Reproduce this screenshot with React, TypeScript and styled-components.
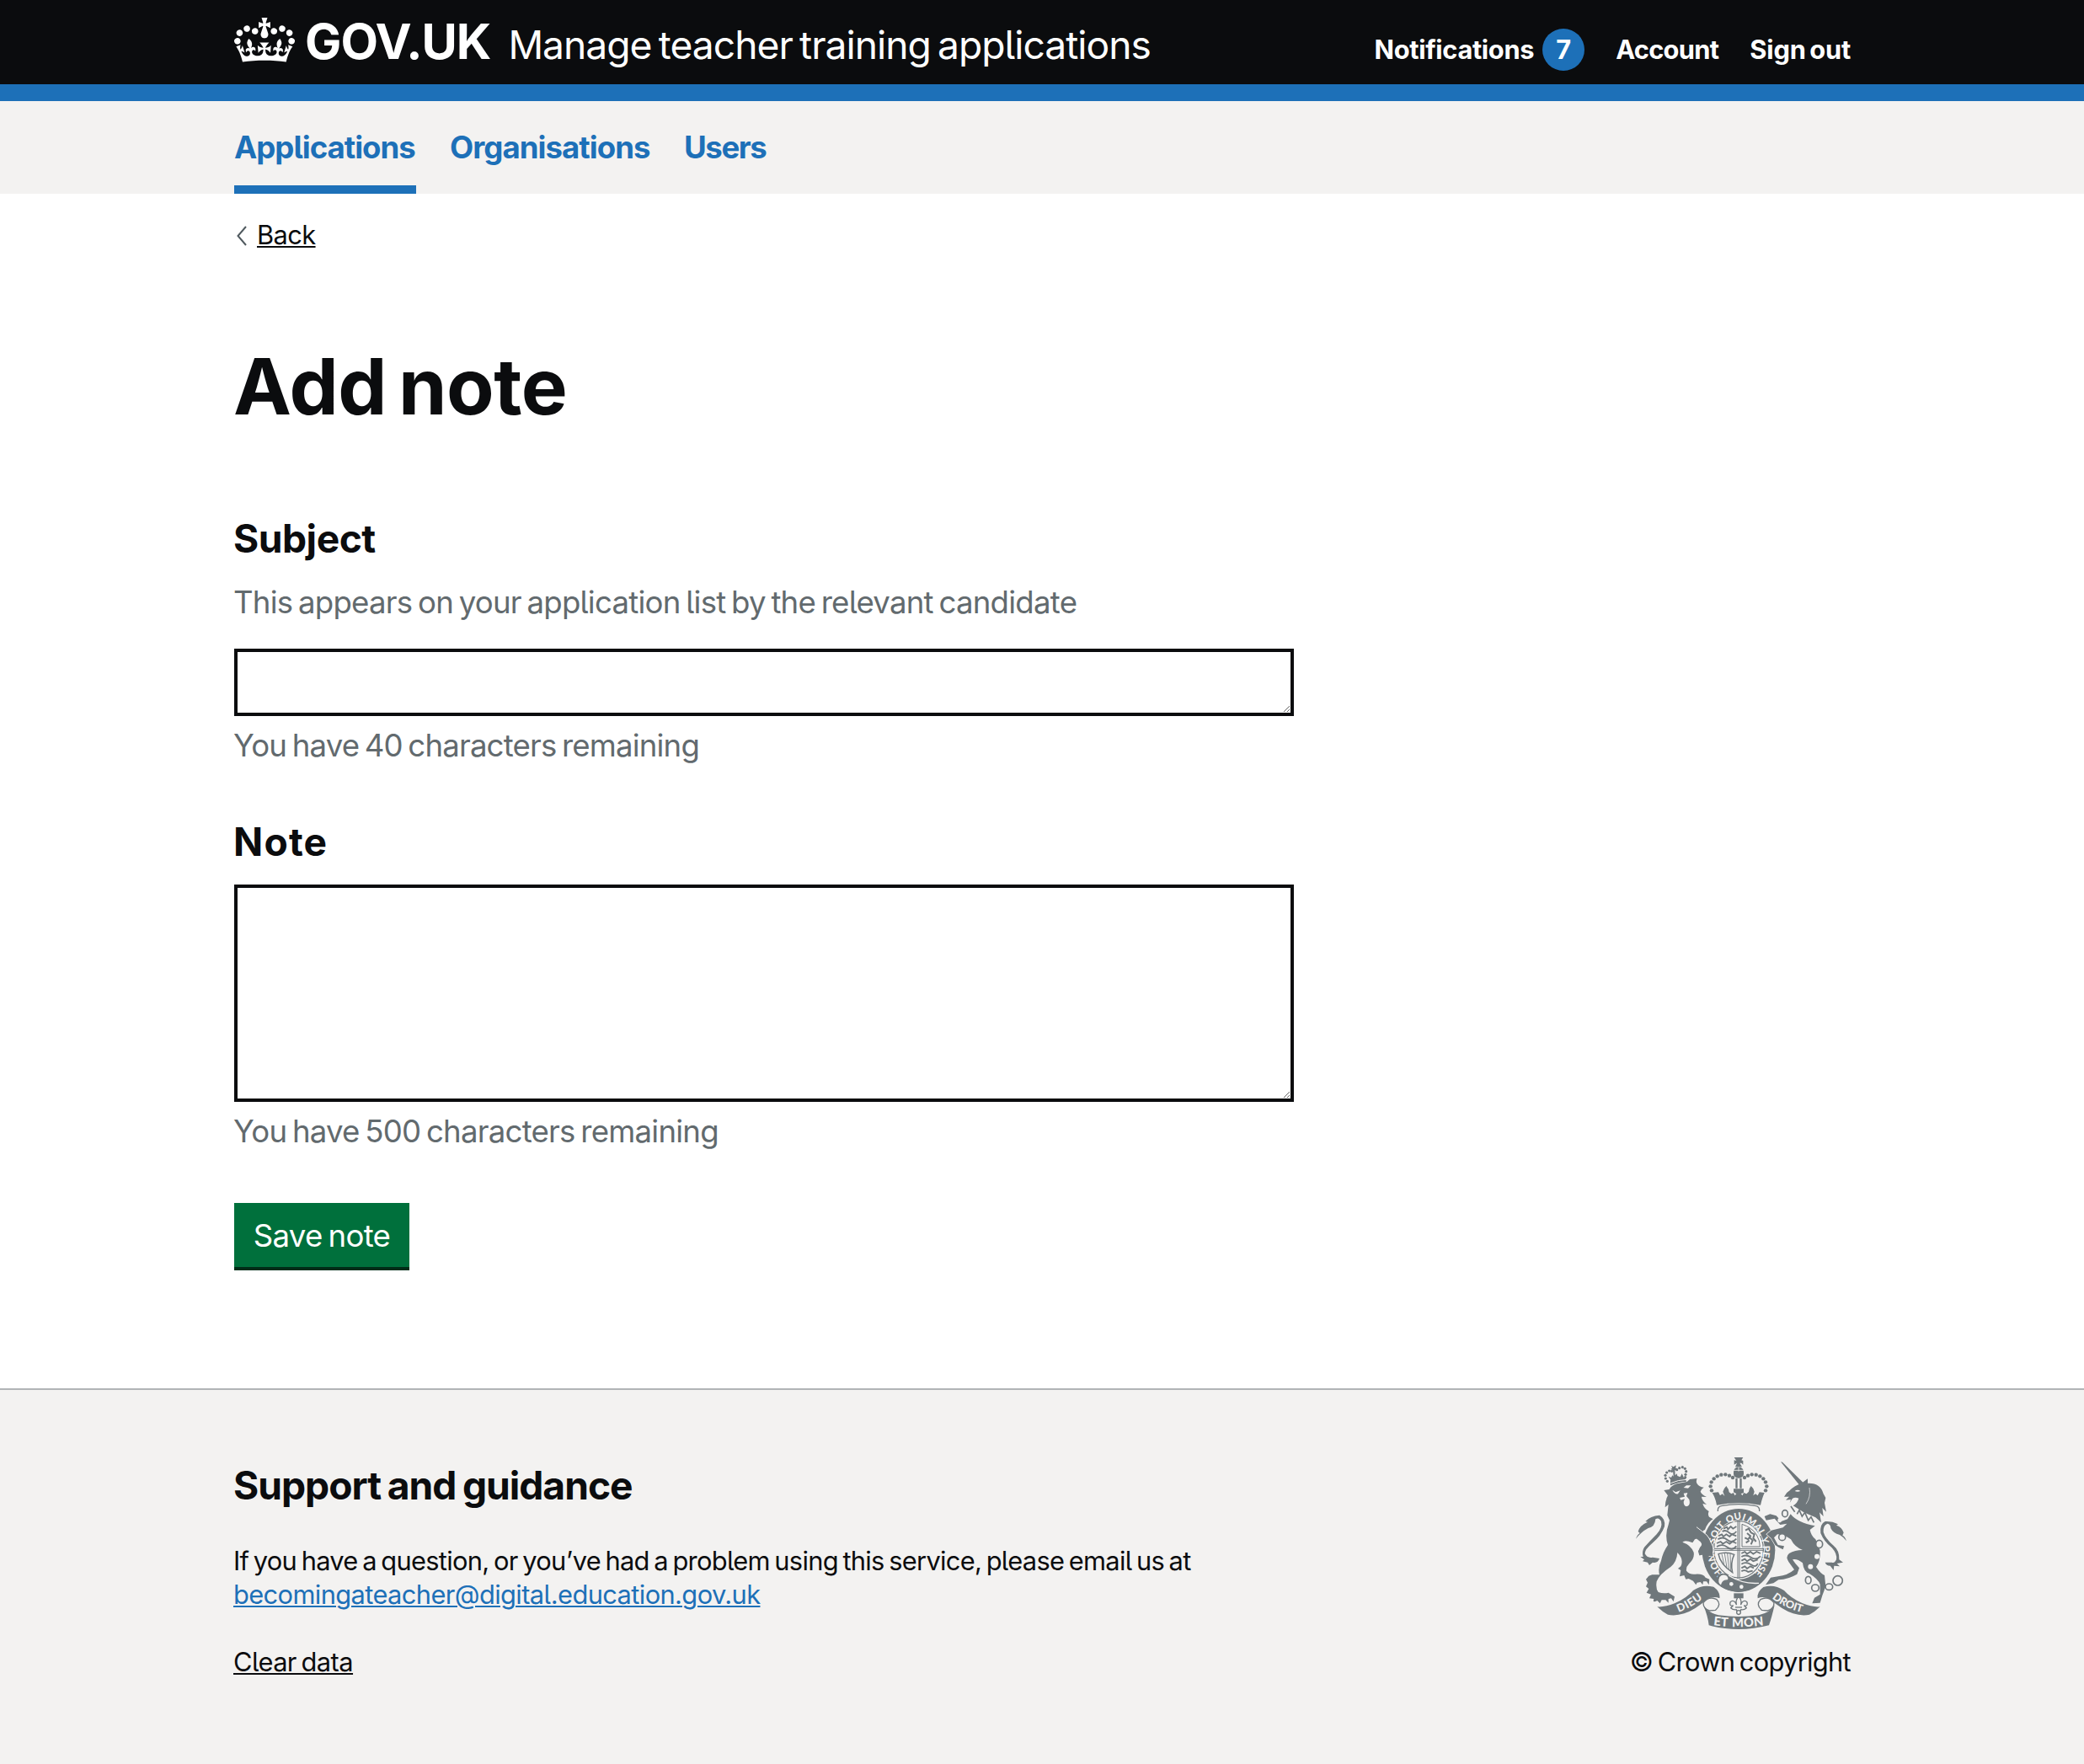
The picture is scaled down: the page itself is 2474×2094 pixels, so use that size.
import React from "react";
import styled, { createGlobalStyle } from "styled-components";

const ink = "#0b0c0e";
const blue = "#1d70b8";
const grey = "#f3f2f1";
const secondary = "#626a6e";
const crestGrey = "#6f777b";

const GlobalStyle = createGlobalStyle`
  *, *::before, *::after { box-sizing: border-box; word-spacing: -0.08em; }
  body {
    margin: 0;
    background: #fff;
    color: ${ink};
    font-family: Inter, Roboto, "Liberation Sans", sans-serif;
    font-feature-settings: "cv05";
  }
  a { color: inherit; text-decoration: none; }
`;

const Page = styled.div`
  display: flex;
  flex-direction: column;
  min-height: 2094px;
`;

const Container = styled.div`
  width: 1920px;
  margin: 0 auto;
`;

const Header = styled.header`
  height: 120px;
  background: ${ink};
  border-bottom: 20px solid ${blue};
  color: #fff;
`;

const HeaderRow = styled(Container)`
  display: flex;
  align-items: baseline;
  justify-content: space-between;
  padding: 19px 0 0 1px;
`;

const Brand = styled.div`
  display: flex;
  align-items: baseline;
  white-space: nowrap;
`;

const CrownIcon = styled.svg`
  align-self: flex-start;
  width: 72px;
  height: 53px;
  margin: 2px 12px 0 0;
  fill: currentColor;
`;

const Logotype = styled.a`
  margin-right: 21px;
  font-size: 57.8px;
  font-weight: 700;
  line-height: 60px;
  letter-spacing: -1px;
`;

const ServiceName = styled.a`
  font-size: 46.2px;
  line-height: 50px;
  letter-spacing: -1px;
`;

const AccountLinks = styled.nav`
  display: flex;
  align-items: baseline;
  gap: 37px;
`;

const AccountLink = styled.a<{ $tracking: number }>`
  display: flex;
  align-items: baseline;
  gap: 10px;
  font-size: 30.8px;
  font-weight: 700;
  line-height: 50px;
  letter-spacing: ${(p) => p.$tracking}px;
  white-space: nowrap;
`;

const Count = styled.span`
  width: 50px;
  height: 50px;
  border-radius: 50%;
  background: ${blue};
  line-height: 50px;
  text-align: center;
`;

const PrimaryNav = styled.nav`
  height: 110px;
  background: ${grey};
`;

const NavRow = styled(Container)`
  display: flex;
  gap: 40px;
  padding-left: 1px;
`;

const NavLink = styled.a<{ $active?: boolean; $width: number; $tracking: number }>`
  width: ${(p) => p.$width}px;
  height: 110px;
  padding-top: 30px;
  border-bottom: 10px solid ${(p) => (p.$active ? blue : "transparent")};
  color: ${blue};
  font-size: 36.6px;
  font-weight: 700;
  line-height: 50px;
  letter-spacing: ${(p) => p.$tracking}px;
  white-space: nowrap;
`;

const Main = styled(Container)`
  display: flex;
  flex-direction: column;
  align-items: flex-start;
  height: 1418px;
  padding-top: 29px;
`;

const BackLink = styled.a`
  display: flex;
  align-items: center;
  gap: 12px;
  padding-left: 4px;
  font-size: 30.8px;
  line-height: 40px;
  letter-spacing: -0.6px;
`;

const Underlined = styled.span`
  text-decoration: underline;
  text-decoration-thickness: 2px;
  text-underline-offset: 2px;
`;

const Chevron = styled.svg`
  width: 12px;
  height: 24px;
  margin-top: 2px;
  fill: none;
  stroke: #505a5f;
  stroke-width: 2;
`;

const Title = styled.h1`
  margin: 109px 0 101px;
  font-size: 92.4px;
  font-weight: 700;
  line-height: 100px;
  letter-spacing: -0.45px;
`;

const Label = styled.label<{ $tracking: number }>`
  font-size: 46.2px;
  font-weight: 700;
  line-height: 60px;
  letter-spacing: ${(p) => p.$tracking}px;
`;

const Field = styled.div<{ $gapAfter: number }>`
  display: flex;
  flex-direction: column;
  align-items: flex-start;
  width: 1259px;
  margin-bottom: ${(p) => p.$gapAfter}px;
`;

const Hint = styled.div<{ $tracking: number }>`
  margin-top: 21px;
  color: ${secondary};
  font-size: 36.6px;
  line-height: 50px;
  letter-spacing: ${(p) => p.$tracking}px;
  white-space: nowrap;
`;

const Counter = styled(Hint)`
  margin-top: 10px;
`;

const TextArea = styled.textarea<{ $height: number; $offset: number }>`
  display: block;
  width: 1258px;
  height: ${(p) => p.$height}px;
  margin: ${(p) => p.$offset}px 0 0 1px;
  padding: 10px;
  border: 4px solid ${ink};
  border-radius: 0;
  background: #fff;
  color: ${ink};
  font: inherit;
  font-size: 36.6px;
  line-height: 50px;
  resize: vertical;
`;

const SaveButton = styled.button`
  width: 208px;
  height: 76px;
  margin-left: 1px;
  padding: 2px 0 0;
  border: 0;
  background: #00703c;
  box-shadow: 0 4px 0 #002d18;
  color: #fff;
  font-family: inherit;
  font-feature-settings: inherit;
  font-size: 36.6px;
  line-height: 74px;
  letter-spacing: -0.65px;
`;

const Footer = styled.footer`
  flex: 1;
  border-top: 2px solid #b1b4b6;
  background: ${grey};
`;

const FooterRow = styled(Container)`
  display: flex;
  justify-content: space-between;
  padding-top: 80px;
`;

const FooterText = styled.div`
  display: flex;
  flex-direction: column;
  align-items: flex-start;
  padding-top: 3px;
`;

const FooterTitle = styled.h2`
  margin: 0 0 40px;
  font-size: 46.2px;
  font-weight: 700;
  line-height: 60px;
  letter-spacing: -1.02px;
  word-spacing: -0.05em;
`;

const FooterLine = styled.div<{ $tracking: number; $color?: string }>`
  color: ${(p) => p.$color ?? ink};
  font-size: 30.8px;
  line-height: 40px;
  letter-spacing: ${(p) => p.$tracking}px;
  white-space: nowrap;
`;

const FooterLinks = styled.div`
  margin-top: 40px;
`;

const Copyright = styled.a`
  display: flex;
  flex-direction: column;
  align-items: flex-end;
  font-size: 30.8px;
  line-height: 40px;
  letter-spacing: -0.68px;
`;

const CrestArt = styled.svg`
  width: 250px;
  height: 204px;
  margin: 0 5px 19px 0;
  letter-spacing: 0;

  text,
  textPath {
    word-spacing: 0.06em;
  }
`;

const Crown = () => (
  <CrownIcon viewBox="0 0 132 97" aria-hidden="true">
    <path
      fillRule="evenodd"
      d="M25 30.2c3.5 1.5 7.7-.2 9.1-3.7 1.5-3.6-.2-7.8-3.9-9.2-3.6-1.4-7.6.3-9.1 3.9-1.4 3.5.3 7.5 3.9 9zM9 39.5c3.6 1.5 7.8-.2 9.2-3.7 1.5-3.6-.2-7.8-3.9-9.1-3.6-1.5-7.6.2-9.1 3.8-1.4 3.5.3 7.5 3.8 9zM4.4 57.2c3.5 1.5 7.7-.2 9.1-3.8 1.5-3.6-.2-7.7-3.9-9.1-3.5-1.5-7.6.3-9.1 3.8-1.4 3.5.3 7.6 3.9 9.1zm38.3-21.4c3.5 1.5 7.7-.2 9.1-3.8 1.5-3.6-.2-7.7-3.9-9.1-3.6-1.5-7.6.3-9.1 3.8-1.3 3.6.4 7.7 3.9 9.1zm64.4-5.6c-3.6 1.5-7.8-.2-9.1-3.7-1.5-3.6.2-7.8 3.8-9.2 3.6-1.4 7.7.3 9.2 3.9 1.3 3.5-.4 7.5-3.9 9zm15.9 9.3c-3.6 1.5-7.7-.2-9.1-3.7-1.5-3.6.2-7.8 3.7-9.1 3.6-1.5 7.7.2 9.2 3.8 1.5 3.5-.3 7.5-3.8 9zm4.7 17.7c-3.6 1.5-7.8-.2-9.2-3.8-1.5-3.6.2-7.7 3.9-9.1 3.6-1.5 7.7.3 9.2 3.8 1.3 3.5-.4 7.6-3.9 9.1zM89.3 35.8c-3.6 1.5-7.8-.2-9.2-3.8-1.4-3.6.2-7.7 3.9-9.1 3.6-1.5 7.7.3 9.2 3.8 1.4 3.6-.3 7.7-3.9 9.1zM69.7 17.7l8.9 4.7V9.3l-8.9 2.8c-.2-.3-.5-.6-.9-.9L72.4 0H59.6l3.5 11.2c-.3.3-.6.5-.9.9l-8.8-2.8v13.1l8.8-4.7c.3.3.6.7.9.9l-5 15.4v.1c-.2.8-.4 1.6-.4 2.4 0 4.1 3.1 7.5 7 8.1h.2c.3 0 .7.1 1 .1.4 0 .7 0 1-.1h.2c4-.6 7.1-4.1 7.1-8.1 0-.8-.1-1.7-.4-2.4V34l-5.1-15.4c.4-.2.7-.6 1-.9zM66 92.8c16.9 0 32.8 1.1 47.1 3.2 4-16.9 8.9-26.7 14-33.5l-9.6-3.4c1 4.9 1.1 7.2 0 10.2-1.5-1.4-3-4.3-4.2-8.7L108.6 76c2.8-2 5-3.2 7.5-3.3-4.4 9.4-10 11.9-13.6 11.2-4.3-.8-6.3-4.6-5.6-7.9 1-4.7 5.7-5.9 8-.5 4.3-8.7-3-11.4-7.6-8.8 7.1-7.2 7.9-13.5 2.1-21.1-8 6.1-8.1 12.3-4.5 20.8-4.7-5.4-12.1-2.5-9.5 6.2 3.4-5.2 7.9-2 7.2 3.1-.6 4.3-6.4 7.8-13.5 7.2-10.3-.9-10.9-8-11.2-13.8 2.5-.5 7.1 1.8 11 7.3L80.2 60c-4.1 4.4-8 5.3-12.3 5.4 1.4-4.4 8-11.6 8-11.6H55.5s6.4 7.2 7.9 11.6c-4.2-.1-8-1-12.3-5.4l1.4 16.4c3.9-5.5 8.5-7.7 10.9-7.3-.3 5.8-.9 12.8-11.1 13.8-7.2.6-12.9-2.9-13.5-7.2-.7-5 3.8-8.3 7.1-3.1 2.7-8.7-4.6-11.6-9.4-6.2 3.7-8.5 3.6-14.7-4.6-20.8-5.8 7.6-5 13.9 2.2 21.1-4.7-2.6-11.9.1-7.7 8.8 2.3-5.5 7.1-4.2 8.1.5.7 3.3-1.3 7.1-5.7 7.9-3.5.7-9-1.8-13.5-11.2 2.5.1 4.7 1.3 7.5 3.3l-4.7-15.4c-1.2 4.4-2.7 7.2-4.3 8.7-1.1-3-.9-5.3 0-10.2l-9.5 3.4c5 6.9 9.9 16.7 14 33.5 14.8-2.1 30.8-3.2 47.7-3.2z"
    />
  </CrownIcon>
);

const crownPearls: [number, number][] = [
  [336, 178], [332, 163], [335, 148], [344, 136], [356, 127], [370, 122], [385, 121], [399, 125], [411, 132],
  [453, 132], [465, 125], [479, 121], [494, 122], [508, 127], [520, 136], [528, 148], [532, 163], [528, 178],
];

const lionPearls: [number, number][] = [
  [178, 145], [172, 135], [171, 124], [176, 114], [185, 108], [194, 109], [212, 104], [221, 98], [232, 95], [241, 100], [245, 110], [243, 121], [242, 131],
];

const chainLinks: [number, number, number, number][] = [
  [597, 260, 10, 12], [587, 344, 12, 12], [719, 369, 12, 14], [680, 497, 10, 13], [705, 525, 13, 12], [754, 521, 13, 11], [785, 499, 17, 17],
];

const mottoWords: [string, string][] = [
  ["HON", "16.5%"], ["SOIT", "35%"], ["QUI", "48.3%"], ["MAL", "60.5%"], ["Y", "69.5%"], ["PENSE", "81%"],
];

const Crest = () => (
  <CrestArt viewBox="66 60 750 612" role="img" aria-label="Royal coat of arms">
    <defs>
      <path id="motto" d="M432 501 A 100 111 0 0 1 432 281 A 100 111 0 0 1 432 501" />
      <path id="dieu" d="M208 615 Q 260 600 318 552" />
      <path id="etmon" d="M330 656 Q 432 671 534 656" />
      <path id="droit" d="M543 554 Q 592 600 676 616" />
    </defs>

    {/* Lion */}
    <g fill={crestGrey}>
      <path d="M166 177 L185 174 Q192 160 212 154 L248 147 L258 138 L284 135 Q279 146 284 154 Q291 166 308 167 Q297 174 296 182 Q302 194 318 201 L300 200 Q301 214 318 228 L304 225 Q309 243 326 252 Q321 263 327 272 L341 280 Q322 290 312 318 Q298 322 312 332 Q328 350 334 372 Q346 392 336 400 Q346 406 342 412 L328 409 L326 417 L314 411 L306 418 L303 407 L292 409 L296 400 L288 395 L295 380 Q306 376 298 362 Q288 344 276 352 L268 364 Q240 352 232 362 Q262 372 272 398 Q276 420 256 438 Q244 450 246 464 Q256 478 278 476 Q306 474 314 488 L328 494 L326 514 L318 502 L306 502 L304 514 L296 504 L284 506 L280 514 L270 500 L254 492 L244 494 L238 480 L222 484 L226 462 L216 456 L226 448 Q238 424 214 399 Q212 432 190 450 Q150 476 140 502 Q136 528 146 540 Q164 546 182 542 L204 556 L200 574 L192 562 L182 564 L182 578 L172 568 L158 568 L152 580 L142 570 Q124 580 130 564 L114 562 L120 548 L104 542 L112 528 L102 520 L108 506 L102 494 L112 482 L124 478 L150 478 Q144 452 156 428 Q162 398 180 372 Q168 336 182 300 L190 268 L186 284 L178 266 L182 228 L170 238 Q170 214 180 196 Z" />
      <path d="M66 350 Q72 334 80 330 L74 324 Q80 302 108 290 L100 288 Q118 268 150 266 Q172 278 168 306 Q156 340 124 366 Q98 388 98 402 Q106 420 126 416 L150 420 Q144 438 126 434 L114 444 L108 434 L90 430 L96 424 L82 414 L92 414 Q86 396 96 380 Q116 358 140 334 Q162 310 156 288 Q148 272 136 280 Q134 308 110 312 Q84 326 66 350Z" />
      <path d="M189 142 L242 133 L246 146 Q214 148 189 160 Z" />
      {lionPearls.map(([x, y]) => (
        <circle key={`${x}-${y}`} cx={x} cy={y} r="4.8" />
      ))}
      <path d="M192 90 L200 94 L209 88 L208 98 L213 102 L205 106 L206 124 L212 118 L214 126 L224 130 L230 118 L238 134 L192 144 L182 128 L192 132 L196 124 L200 128 L198 106 L190 102 L196 98Z" />
    </g>
    <g fill={grey}>
      <path d="M196 176 L208 184 L224 178 L216 190 Q204 192 196 176Z" />
      <path d="M236 168 L246 160 L262 160 L252 170 Z" />
      <path d="M222 204 L240 200 L236 188 L250 186 L246 198 L256 210 Q262 232 246 235 Q236 232 236 218 L240 208 L226 212Z" />
    </g>
    <path d="M190 152 Q216 140 247 139" fill="none" stroke={grey} strokeWidth="3" />

    {/* Crown */}
    <g fill={crestGrey}>
      <path d="M416 60 H448 L442 70 L448 72 V86 L442 80 L436 80 L444 94 H420 L426 80 L416 86 V70 L424 72Z" />
      <path d="M414 112 A18 18 0 0 1 450 112 V120 A18 14 0 0 1 414 120Z" />
      {crownPearls.map(([x, y]) => (
        <circle key={`${x}-${y}`} cx={x} cy={y} r="6.6" />
      ))}
      <path d="M421 134 H428 V170 H421Z M436 134 H443 V170 H436Z" />
      <path d="M338 186 L360 184 L366 196 L374 190 L382 198 L376 182 Q380 170 388 162 Q398 174 398 184 L406 190 L414 186 L418 196 L424 190 L414 184 V172 H450 V186 L440 190 L446 196 L450 186 L460 190 L468 182 Q468 172 476 162 Q486 170 488 182 L484 196 L492 190 L500 196 L506 184 L524 186 Q514 210 510 230 Q432 216 354 230 Q350 206 338 186Z" />
    </g>
    <path d="M358 252 Q356 234 374 232 Q432 222 490 232 Q508 234 506 252" stroke={crestGrey} strokeWidth="4" fill="none" />
    <path d="M414 106 H450 M432 94 V110" stroke={grey} strokeWidth="2.5" />

    {/* Garter and shield */}
    <ellipse cx="432" cy="391" rx="133" ry="152" fill={grey} />
    <ellipse cx="432" cy="391" rx="130" ry="148" fill={crestGrey} />
    <ellipse cx="432" cy="389" rx="93" ry="106" fill={grey} />
    <ellipse cx="432" cy="388" rx="88" ry="101" fill={grey} stroke={crestGrey} strokeWidth="3.5" />
    <path d="M429 284 V492 M435 284 V492 M342 385 H522 M342 391 H522" stroke={crestGrey} strokeWidth="3" />
    <g fill="none" stroke={crestGrey} strokeWidth="5.5">
      <path d="M378 314 L390 308 L394 316 L404 306 L412 314 L424 306 M374 324 Q386 316 398 328 T424 324" />
      <path d="M360 340 L372 334 L378 342 L388 334 L400 342 L408 334 L424 340 M358 352 Q376 340 392 354 T424 350" />
      <path d="M354 366 L368 360 L376 368 L388 360 L400 368 L410 360 L424 366 M354 378 Q374 366 392 380 T424 376" />
      <path d="M442 402 L454 396 L462 404 L474 396 L484 404 L496 396 L510 402 M442 414 Q458 404 476 416 T510 412" />
      <path d="M442 428 L454 422 L462 430 L474 422 L484 430 L500 424 M442 440 Q458 430 476 442 T500 438" />
      <path d="M442 454 L454 448 L462 456 L474 448 L486 454 M442 466 Q454 458 466 468 L482 464" />
      <path d="M444 298 V378 H508 Q508 356 496 336 Q480 310 444 298Z" strokeWidth="3" />
      <path d="M456 320 L468 314 L476 328 L488 334 L484 348 L494 360 M462 330 L474 340 L466 352 L454 346 M470 344 L482 356 L476 370 M458 364 L470 356" strokeWidth="6" />
      <path d="M360 404 Q388 394 416 406 Q402 436 410 470 Q366 440 360 404Z" strokeWidth="4.5" />
      <path d="M372 404 L380 440 M382 402 L390 452 M392 402 L398 458 M402 404 L404 464" strokeWidth="2.5" />
    </g>
    <g fill={grey} fontFamily="Lato, sans-serif" fontWeight="900" fontSize="34" textAnchor="middle">
      {mottoWords.map(([word, offset]) => (
        <text key={word}>
          <textPath href="#motto" startOffset={offset}>{word}</textPath>
        </text>
      ))}
    </g>
    <path d="M359 478 Q380 466 398 484 L446 506 L504 508 Q470 540 430 540 Q392 536 368 520 Q350 500 359 478Z" fill={crestGrey} />
    <path d="M362 486 Q372 470 390 480 Q400 488 394 498 Q374 496 370 518 Q352 508 362 486Z" fill={grey} stroke={crestGrey} strokeWidth="4" />
    <path d="M396 480 Q446 512 504 508" stroke={grey} strokeWidth="4" fill="none" />
    <circle cx="406" cy="511" r="7" fill={grey} />
    <circle cx="442" cy="521" r="7" fill={grey} />

    {/* Paw laid over the garter */}
    <path d="M282 308 L318 336 Q330 352 334 372 Q346 392 336 400 L342 412 L326 411 L326 417 L314 411 L306 418 L303 407 L292 409 L288 395 L295 380 Q304 372 298 362 L270 340 Z" fill={crestGrey} />
    <path d="M282 308 L318 336 Q332 352 338 372 Q350 392 340 402" stroke={grey} strokeWidth="3" fill="none" />

    {/* Unicorn */}
    <g fill={crestGrey} stroke={grey} strokeWidth="4" paintOrder="stroke">
      <path d="M617 262 Q640 292 704 304 L686 318 Q690 340 706 352 L722 392 Q724 428 708 450 Q724 474 738 480 L742 520 L730 552 L722 578 L694 580 L702 560 L722 548 L722 512 Q716 494 684 474 Q664 470 660 436 Q640 420 624 424 Q634 440 648 454 L640 476 Q610 494 574 496 L556 508 L528 514 L546 488 L572 484 Q608 480 630 460 L610 432 Q598 414 612 402 Q632 390 660 390 Q632 380 618 352 Q594 334 570 334 L558 346 L572 372 L594 376 L590 388 L574 380 L562 372 L548 348 L532 334 L548 320 L590 310 L604 296 L580 300 L560 278 L530 284 L524 270 L544 262 L566 268 L584 288 L606 280 Z" />
    </g>
    <g fill={crestGrey}>
      <path d="M582 76 L588 77 L662 150 L648 158 Z" />
      <path d="M594 200 Q600 186 614 178 Q632 160 654 154 L678 136 L678 152 Q724 150 734 190 L742 204 L738 222 L744 254 L730 240 L734 270 L720 256 L726 292 L706 274 L664 256 L626 232 Q642 222 646 206 Q634 200 624 206 L614 222 L618 210 L600 212 L612 200Z" />
      <path d="M816 358 Q810 340 802 338 L806 328 Q800 308 780 302 L786 298 Q764 286 740 288 Q720 298 724 330 Q736 360 764 382 Q784 404 780 424 Q774 438 764 434 L740 434 Q744 446 758 446 L770 462 L772 446 L792 448 L782 438 L804 434 L790 424 Q792 392 770 374 Q740 348 734 326 Q732 302 748 296 Q760 298 760 312 Q768 330 792 336 Q806 344 816 358Z" />
    </g>
    <path d="M622 236 L616 258 L704 302 L718 286 L706 282 L700 292 L690 272 L680 284 L668 256 L660 272 L648 248 L640 260Z" fill={grey} />
    <path d="M618 234 L632 254 M640 262 L648 248 L658 270 L668 256 L680 284 L690 272 L700 292" stroke={crestGrey} strokeWidth="5" fill="none" />
    <path d="M632 180 Q642 172 652 180 Q642 184 632 180Z" fill={grey} />
    <path d="M684 168 Q690 200 672 226" stroke={grey} strokeWidth="2" fill="none" />
    <g fill={grey} stroke={crestGrey} strokeWidth="5">
      {chainLinks.map(([x, y, rx, ry]) => (
        <ellipse key={`${x}-${y}`} cx={x} cy={y} rx={rx} ry={ry} />
      ))}
    </g>
    <g fill={grey}>
      <ellipse cx="578" cy="284" rx="7" ry="8" />
      <circle cx="711" cy="413" r="9" />
      <circle cx="688" cy="449" r="9" />
    </g>

    {/* Ribbon */}
    <g fill={crestGrey}>
      <path d="M142 592 Q170 594 204 580 Q246 562 270 534 Q306 510 344 522 Q368 540 364 562 Q344 552 318 566 Q278 602 238 616 Q206 626 180 620 Q160 610 142 592Z" />
      <path d="M722 592 Q694 594 660 580 Q618 562 594 534 Q558 510 520 522 Q496 540 500 562 Q520 552 546 566 Q586 602 626 616 Q658 626 684 620 Q704 610 722 592Z" />
    </g>
    <path d="M306 578 Q326 552 354 566 Q372 584 350 604 L328 606 Q306 598 306 578Z" fill={grey} stroke={crestGrey} strokeWidth="4" />
    <path d="M558 578 Q538 552 510 566 Q492 584 514 604 L536 606 Q558 598 558 578Z" fill={grey} stroke={crestGrey} strokeWidth="4" />
    <path d="M306 586 Q320 612 360 622 Q432 632 504 622 Q546 612 560 586 Q550 630 540 658 Q432 686 326 658 Q322 624 306 586Z" fill={crestGrey} />
    <path d="M415 544 H449 V562 H415Z" fill={crestGrey} />
    <g fill={grey} stroke={crestGrey} strokeWidth="4" strokeLinejoin="round">
      <path d="M432 620 L424 602 Q412 604 404 596 L412 588 Q398 590 402 576 Q410 566 420 576 L424 584 Q420 568 432 556 Q444 568 440 584 L444 576 Q454 566 462 576 Q466 590 452 588 L460 596 Q452 604 440 602 Z" />
      <circle cx="432" cy="612" r="7" />
      <path d="M420 594 H444" />
    </g>
    <g fill={grey} fontFamily="Lato, sans-serif" fontWeight="900" textAnchor="middle">
      <text fontSize="39" letterSpacing="2"><textPath href="#dieu" startOffset="48%">DIEU</textPath></text>
      <text fontSize="44" letterSpacing="1"><textPath href="#etmon" startOffset="50%">ET MON</textPath></text>
      <text fontSize="38"><textPath href="#droit" startOffset="47%">DROIT</textPath></text>
    </g>
  </CrestArt>
);

export default function App() {
  return (
    <Page>
      <GlobalStyle />
      <Header>
        <HeaderRow>
          <Brand>
            <Crown />
            <Logotype href="#">GOV.UK</Logotype>
            <ServiceName href="#">Manage teacher training applications</ServiceName>
          </Brand>
          <AccountLinks>
            <AccountLink href="#" $tracking={-0.344}>
              Notifications <Count>7</Count>
            </AccountLink>
            <AccountLink href="#" $tracking={-0.7}>Account</AccountLink>
            <AccountLink href="#" $tracking={-0.2}>Sign out</AccountLink>
          </AccountLinks>
        </HeaderRow>
      </Header>

      <PrimaryNav>
        <NavRow>
          <NavLink href="#" $active $width={216} $tracking={-1}>Applications</NavLink>
          <NavLink href="#" $width={238} $tracking={-0.95}>Organisations</NavLink>
          <NavLink href="#" $width={100} $tracking={-1.4}>Users</NavLink>
        </NavRow>
      </PrimaryNav>

      <Main as="main">
        <BackLink href="#">
          <Chevron viewBox="0 0 12 24" aria-hidden="true">
            <path d="M11 1 L1.5 12 L11 23" />
          </Chevron>
          <Underlined>Back</Underlined>
        </BackLink>

        <Title>Add note</Title>

        <Field $gapAfter={59}>
          <Label htmlFor="subject" $tracking={-0.5}>Subject</Label>
          <Hint $tracking={-0.75}>This appears on your application list by the relevant candidate</Hint>
          <TextArea id="subject" rows={1} $height={80} $offset={30} />
          <Counter $tracking={-0.82}>You have 40 characters remaining</Counter>
        </Field>

        <Field $gapAfter={60}>
          <Label htmlFor="note" $tracking={1.2}>Note</Label>
          <TextArea id="note" rows={5} $height={258} $offset={21} />
          <Counter $tracking={-0.76}>You have 500 characters remaining</Counter>
        </Field>

        <SaveButton type="button">Save note</SaveButton>
      </Main>

      <Footer>
        <FooterRow>
          <FooterText>
            <FooterTitle>Support and guidance</FooterTitle>
            <FooterLine $tracking={-0.686}>
              If you have a question, or you’ve had a problem using this service, please email us at
            </FooterLine>
            <FooterLine as="a" href="#" $tracking={-0.6} $color={blue}>
              <Underlined>becomingateacher@digital.education.gov.uk</Underlined>
            </FooterLine>
            <FooterLinks>
              <FooterLine as="a" href="#" $tracking={-0.55}>
                <Underlined>Clear data</Underlined>
              </FooterLine>
            </FooterLinks>
          </FooterText>
          <Copyright href="#">
            <Crest />
            © Crown copyright
          </Copyright>
        </FooterRow>
      </Footer>
    </Page>
  );
}
